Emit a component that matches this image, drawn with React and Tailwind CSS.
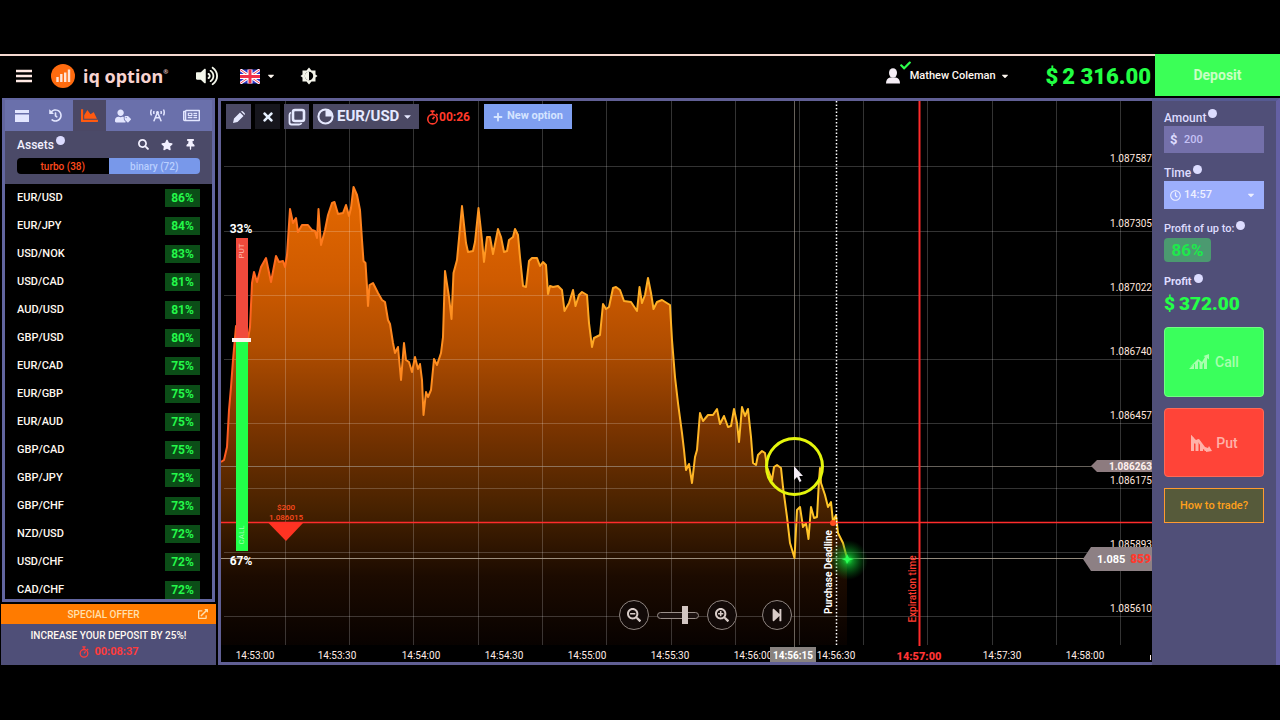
import React from "react";
import {
  FaBars, FaVolumeUp, FaCaretDown, FaHistory, FaChartArea, FaBroadcastTower, FaSearch, FaStar,
  FaThumbtack, FaExternalLinkAlt, FaCheck, FaTimes, FaPlus, FaSearchMinus, FaSearchPlus,
  FaStepForward, FaRegNewspaper, FaUserTag, FaRegClock,
} from "react-icons/fa";

const ASSETS = [
  ["EUR/USD", 86], ["EUR/JPY", 84], ["USD/NOK", 83], ["USD/CAD", 81], ["AUD/USD", 81],
  ["GBP/USD", 80], ["EUR/CAD", 75], ["EUR/GBP", 75], ["EUR/AUD", 75], ["GBP/CAD", 75],
  ["GBP/JPY", 73], ["GBP/CHF", 73], ["NZD/USD", 72], ["USD/CHF", 72], ["CAD/CHF", 72],
];

const LINE =
  "221,462 224,460 227,447 229,410 231,387 233,360 236,326 239,345 247,345 250,327 252,283 254,272 257,282 261,267 266,258 271,282 276,256 279,262 283,261 285,267 287,255 290,209 293,223 296,218 298,232 302,225 308,225 312,230 315,231 317,238 318.5,209 321,245 325,230 328,215 332,203 334.5,202 338,214 343,213 346,205 349,216 351,208 353.5,187 357,195 360,210 362,240 363.5,261 365.5,263 367,287 368,306 369.5,285 373,283 378,293 382,300 385,302 388,320 390,324 393,343 395,353 398,347 401,380 404,343 406,360 409,362 412,372 415,357 418,369 420,364 422,380 423.5,415 426,392 428,397 431,390 434,359 437,365 441,353 443,337 445,271 449,297 451.5,319 453.5,273 457,260 462,206 466,243 468,252 473,251 475,242 478.5,208 482,240 484,262 487,237 490,237 493,254 498,229 501,237 504,252 507,251 509,240 513,237 515,229 518,235 520,257 523,286 526,287 529,261 532,258 537,258 540,266 543,262 546,265 548,294 550,286 553,287 558,286 562,290 564.5,311 569,303 573,290 575.5,306 579,295 582,292 587,295 589,323 592,347 594,338 600,335 603,304 606,309 609,307 613,288 616,287 620,290 624,301 631,302 637,311 639.5,287 642,303 645,295 648,278 651,293 653.5,309 657,302 662,300 670,305 672,340 675,377 678,403 682,433 684,450 686,470 689,464 692,483 695,457 697,450 700,413 703,421 708,415 713,415 717,409 720,424 724,416 728,427 731,426 734,409 737,423 739,442 742,407 745,416 748,409 751,437 753,463 756,465 758,455 762,451 765,453 767,467 772,480 774,467 777,465 781,468 783,487 787,517 790,543 794.5,558 797,510 800,507 803,527 806,523 808.5,539 811,507 814,518 817,517 819,480 820,468 821,483 825,495 828,507 831,502 833,522 836,515 838,533 843,543 847,558";

const GRID_X = [285.5, 349.5, 413.5, 478.5, 542.5, 606.5, 671.5, 735.5, 799.5, 863.5, 927.5, 992.5, 1056.5, 1120.5];
const GRID_Y = [166.5, 231.5, 295.5, 359.5, 423.5, 488.5, 552.5, 616.5];
const PRICES = ["1.087587", "1.087305", "1.087022", "1.086740", "1.086457", "1.086175", "1.085893", "1.085610"];
const TIMES = [
  [255, "14:53:00"], [337, "14:53:30"], [421, "14:54:00"], [504, "14:54:30"], [587, "14:55:00"],
  [670, "14:55:30"], [753, "14:56:00"], [836, "14:56:30"], [1002, "14:57:30"], [1085, "14:58:00"],
];

function Hint() {
  return <span aria-hidden="true" className="mb-2 ml-0.5 inline-block size-[9px] rounded-full bg-[#dcdcff]" />;
}

function Stopwatch({ className }) {
  return (
    <svg viewBox="0 0 16 18" className={className} fill="none" stroke="currentColor" strokeWidth="2" aria-hidden="true">
      <circle cx="8" cy="11" r="5.8" />
      <path d="M5.5 1.2h5M8 1.5v3M12.5 4.5l1.8 1.8M8 11l2.5-3" />
    </svg>
  );
}

function Flag() {
  return (
    <svg viewBox="0 0 20 14" className="h-[15px] w-5" aria-hidden="true">
      <rect width="20" height="14" fill="#2b35c8" />
      <path d="M0 0l20 14M20 0L0 14" stroke="#fff" strokeWidth="3" />
      <path d="M0 0l20 14M20 0L0 14" stroke="#f0405a" strokeWidth="1" />
      <path d="M10 0v14M0 7h20" stroke="#fff" strokeWidth="5" />
      <path d="M10 0v14M0 7h20" stroke="#f0304a" strokeWidth="3" />
    </svg>
  );
}

function Header() {
  return (
    <header className="flex h-[42px] items-center border-t-2 border-[#f5d9d0] bg-black">
      <button aria-label="Menu" className="ml-4">
        <svg viewBox="0 0 16 14" className="h-[14px] w-4" stroke="#ffe9e4" strokeWidth="2.600" aria-hidden="true"><path d="M0 2h16M0 7h16M0 12h16" /></svg>
      </button>
      <a href="#home" className="ml-[19px] flex items-center" aria-label="iq option">
        <svg viewBox="0 0 24 24" className="size-6" aria-hidden="true">
          <circle cx="12" cy="12" r="12" fill="#ff6b0f" />
          <path d="M6.500 18v-5M10.300 18v-8M14.200 18V8.500M18 18V5.500" stroke="#ffe3d6" strokeWidth="2.400" />
        </svg>
        <span className="ml-2 flex items-start font-['Noto_Sans'] text-[18px] leading-6 font-bold text-[#f7d3d0]">
          iq option<span className="text-[6px] leading-4">®</span>
        </span>
      </a>
      <button aria-label="Sound" className="ml-7"><FaVolumeUp size={22} color="#f3f6ea" /></button>
      <button aria-label="Language" className="ml-[22px] flex items-center gap-1.5"><Flag /><FaCaretDown size={10} /></button>
      <button aria-label="Theme" className="ml-6">
        <svg viewBox="0 0 18 18" className="size-[18px]" aria-hidden="true">
          <path d="M9 .5l2.500 3h4v4L17.500 9l-2 1.500v4h-4L9 17.500l-2.500-3h-4v-4L.5 9l2-1.500v-4h4z" fill="#f4f4ea" />
          <circle cx="9" cy="9" r="4.200" fill="#000" />
          <path d="M9 4.800a4.200 4.200 0 0 0 0 8.400z" fill="#f4f4ea" />
        </svg>
      </button>
      <div className="flex-1" />
      <button className="flex items-center text-[11px] font-medium">
        <span className="relative mr-2.5">
          <svg viewBox="0 0 14 16" className="h-4 w-[14px]" fill="#f5eef5" aria-hidden="true">
            <ellipse cx="7" cy="5" rx="4" ry="4.800" /><path d="M0 15.500q0-5 4-6h6q4 1 4 6z" />
          </svg>
          <FaCheck size={11} color="#2dff4c" className="absolute -top-2 left-[14px]" />
        </span>
        Mathew Coleman<FaCaretDown size={10} className="ml-1" />
      </button>
      <div className="mr-1 ml-9 flex items-center gap-1 text-[22px] font-black text-[#22ff44]">
        <span>$</span><span>2 316.00</span>
      </div>
      <button className="-mt-0.5 h-[42px] w-[125px] bg-[#3bff57] text-[14px] font-bold text-[#c9ffc4]">Deposit</button>
    </header>
  );
}

function AssetsPanel() {
  const tab = "flex h-full flex-1 items-center justify-center text-[#e3e6ff]";
  return (
    <aside className="flex w-[216px] shrink-0 flex-col pl-0.5">
      <div className="mr-px flex h-[504px] flex-col overflow-hidden border-[3px] border-t-2 border-[#6266a0] bg-black">
        <div className="flex h-[31px] shrink-0 bg-[#6a70ab] pr-1">
          <button aria-label="Portfolio" className={tab}>
            <svg viewBox="0 0 14 14" className="size-[14px]" fill="currentColor"><path d="M0 1h14v3H0zM0 5.500h14V13H0z" /></svg>
          </button>
          <button aria-label="History" className={tab}><FaHistory size={13} /></button>
          <button aria-label="Assets" className="flex flex-1 items-center justify-center bg-[#4b4865] text-[#ff5a10]"><FaChartArea size={17} /></button>
          <button aria-label="Traders" className={tab}><FaUserTag size={16} /></button>
          <button aria-label="Signals" className={tab}><FaBroadcastTower size={15} /></button>
          <button aria-label="News" className={tab}><FaRegNewspaper size={17} /></button>
        </div>
        <div className="h-[53px] shrink-0 bg-[#4b4a68] px-3">
          <div className="flex h-[27px] items-center text-[12px] font-medium text-[#f2f0ff]">
            <span className="flex items-center">Assets<Hint /></span>
            <div className="mr-1 ml-auto flex gap-3">
              <button aria-label="Search"><FaSearch size={11} /></button>
              <button aria-label="Favourites"><FaStar size={12} /></button>
              <button aria-label="Pin"><FaThumbtack size={11} /></button>
            </div>
          </div>
          <div className="flex h-4 overflow-hidden rounded-sm text-[10px] font-medium">
            <button className="flex-1 bg-black text-[#ff4a1c]">turbo (38)</button>
            <button className="flex-1 bg-[#7898ea] text-[#b9cfff]">binary (72)</button>
          </div>
        </div>
        <table className="w-full shrink-0 text-[12px] font-medium">
          <tbody>
            {ASSETS.map(([name, pct]) => (
              <tr key={name} className="h-7">
                <td className="py-0 pl-3 text-[11px]">{name}</td>
                <td className="py-0 pr-3">
                  <span className="ml-auto block h-[18px] w-[35px] bg-[#0b4d17] text-center leading-[18px] font-bold text-[#24f84a]">{pct}%</span>
                </td>
              </tr>
            ))}
          </tbody>
        </table>
      </div>
      <a href="#offer" className="-ml-px mt-0.5 flex h-5 items-center bg-[#ff7b00] px-2 text-[10px] font-medium text-[#ffe0ae]">
        <span className="flex-1 text-center">SPECIAL OFFER</span><FaExternalLinkAlt size={10} />
      </a>
      <div className="-ml-px flex flex-1 flex-col items-center bg-[#4f4f78] pt-1 text-[10px] leading-4 font-medium">
        <span>INCREASE YOUR DEPOSIT BY 25%!</span>
        <span className="flex items-center gap-1 text-[11px] font-bold text-[#ff3b3b]"><Stopwatch className="size-3" />00:08:37</span>
      </div>
    </aside>
  );
}

function Chart() {
  return (
    <svg viewBox="221 101 931 561" className="block h-auto w-full" fontFamily="Roboto, sans-serif" role="img" aria-label="EUR/USD price chart">
      <defs>
        <linearGradient id="area" gradientUnits="userSpaceOnUse" x1="0" y1="187" x2="0" y2="645">
          <stop offset="0" stopColor="#e46800" />
          <stop offset="0.2" stopColor="#cf5b00" />
          <stop offset="0.35" stopColor="#b04d00" />
          <stop offset="0.52" stopColor="#7c3500" />
          <stop offset="0.7" stopColor="#482200" />
          <stop offset="0.85" stopColor="#1c0b00" />
          <stop offset="1" stopColor="#080200" />
        </linearGradient>
        <linearGradient id="stroke" gradientUnits="userSpaceOnUse" x1="221" y1="0" x2="850" y2="0">
          <stop offset="0" stopColor="#ff5a22" />
          <stop offset="0.15" stopColor="#ff7a1c" />
          <stop offset="0.5" stopColor="#ffa024" />
          <stop offset="1" stopColor="#ffc928" />
        </linearGradient>
        <radialGradient id="glow">
          <stop offset="0" stopColor="#1cff45" />
          <stop offset="0.25" stopColor="#11c832" stopOpacity="0.7" />
          <stop offset="1" stopColor="#067a18" stopOpacity="0" />
        </radialGradient>
      </defs>
      <polygon points={LINE + " 847,645 221,645"} fill="url(#area)" />
      <g stroke="#fff" strokeOpacity="0.2">
        {GRID_X.map((x) => <path key={x} d={`M${x} 101V645`} />)}
        {GRID_Y.map((y) => <path key={y} d={`M224 ${y}H1152`} />)}
      </g>
      <path d="M221 466.500H1094M794.500 101V648" stroke="#aaa296" strokeOpacity="0.6" />
      <path d="M221 558.500H1086" stroke="#c5b9a8" strokeOpacity="0.75" />
      <polyline points={LINE} fill="none" stroke="url(#stroke)" strokeWidth="2" strokeLinejoin="round" />
      <path d="M221 522.500H1152" stroke="#ff2c2c" strokeWidth="1.500" />
      <path d="M836.500 101V645" stroke="#fff" strokeWidth="1.500" strokeDasharray="1.500 2" />
      <path d="M919.500 101V646" stroke="#ff2b2b" strokeWidth="2" />
      <circle cx="833" cy="523" r="3" fill="#ff4b20" />
      <circle cx="848" cy="560" r="20" fill="url(#glow)" />
      <path d="M847 554l2 4 5 1-5 1.500-2 3.500-1.500-3.500-4-1.500 4-1z" fill="#2bff55" />

      <path d="M268.500 523H303L286 541z" fill="#ff3322" />
      <g fill="#ff4a1e" fontSize="8" fontWeight="500" textAnchor="middle">
        <text x="286" y="510">$200</text>
        <text x="286" y="520">1.086015</text>
      </g>

      <rect x="236" y="238" width="12" height="103" fill="#f04a3c" />
      <rect x="236" y="341" width="12" height="210" fill="#22ff49" />
      <rect x="232" y="338" width="19" height="4" fill="#fff0ec" />
      <g fill="#fff" fontSize="12" fontWeight="700" textAnchor="middle">
        <text x="241" y="233">33%</text>
        <text x="241" y="565">67%</text>
      </g>
      <g fontSize="8" textAnchor="middle">
        <text transform="translate(244 251) rotate(-90)" fill="#ffb9ae">PUT</text>
        <text transform="translate(244 535) rotate(-90)" fill="#9cffac">CALL</text>
      </g>

      <text transform="translate(832 572) rotate(-90)" fill="#fff" fontSize="10" fontWeight="700" textAnchor="middle">Purchase Deadline</text>
      <text transform="translate(916 589) rotate(-90)" fill="#ff3c2e" fontSize="10" fontWeight="500" textAnchor="middle">Expiration time</text>

      <g fill="#ffe6df" fontSize="10" textAnchor="end">
        {PRICES.map((p, i) => <text key={p} x="1152" y={GRID_Y[i] - 4.5}>{p}</text>)}
      </g>
      <path d="M1091 466l6-6h55v12h-55z" fill="#8d7b7f" />
      <text x="1152" y="470" fill="#fff0ee" fontSize="10" fontWeight="700" textAnchor="end">1.086263</text>
      <path d="M1083 559l8-12h61v24h-61z" fill="#8d8084" />
      <text x="1097" y="563" fill="#fff" fontSize="11" fontWeight="700">1.085</text>
      <text x="1151" y="563" fill="#ff3a2e" fontSize="12" fontWeight="900" textAnchor="end">859</text>

      <g fill="#ffece6" fontSize="10" textAnchor="middle">
        {TIMES.map(([x, t]) => <text key={t} x={x} y="659">{t}</text>)}
        <rect x="770" y="647" width="46" height="15" fill="#88827f" />
        <text x="793" y="659" fill="#fff" fontWeight="700">14:56:15</text>
        <text x="919" y="660" fill="#ff3434" fontSize="11" fontWeight="900">14:57:00</text>
      </g>
      <rect x="1150" y="655" width="1" height="5" fill="#ffece6" />

      <circle cx="794.500" cy="466.500" r="28" fill="none" stroke="#e4f50c" strokeWidth="3" />
      <path d="M794 466v14l3-3 2.500 5 2-1-2.500-5h4z" fill="#f3ecf5" />
    </svg>
  );
}

function ChartPanel() {
  const tool = "flex size-[25px] items-center justify-center bg-[#4b4964] text-[#e6e9ff]";
  const round = "flex size-[30px] items-center justify-center rounded-full border border-[#8f8580] bg-[#120a08] text-[#d8ccc8]";
  return (
    <main className="relative ml-0.5 min-w-0 flex-1 border-y-[3px] border-l-[3px] border-[#605f94]">
      <Chart />
      <div className="absolute top-[3px] left-[5px] flex items-start gap-1">
        <button aria-label="Draw" className={tool}>
          <svg viewBox="0 0 14 14" className="size-[14px]" fill="currentColor" aria-hidden="true"><path d="M1 13l1-4.500 6-6L11.500 6l-6 6zM9 1.500q1-1 2 0l1.500 1.500q1 1 0 2z" /></svg>
        </button>
        <button aria-label="Close" className="flex size-[25px] items-center justify-center bg-[#16161d] text-[#e6f0ff]"><FaTimes size={14} /></button>
        <button aria-label="Duplicate" className={tool}>
          <svg viewBox="0 0 18 18" className="size-[18px]" fill="none" stroke="currentColor" aria-hidden="true">
            <rect x="5" y="2" width="11" height="11" rx="2" strokeWidth="2.600" />
            <path d="M3 4.500Q1.500 5 1.500 7v7.500q0 2 2 2H11q2 0 2.500-1.500" strokeWidth="1.800" />
          </svg>
        </button>
        <div className="relative flex h-[25px] w-[106px] items-center bg-[#4b4964] text-[#e6e9ff]">
          <svg viewBox="0 0 18 18" className="absolute left-1 size-[17px]" fill="none" stroke="currentColor" strokeWidth="2.200" aria-hidden="true">
            <circle cx="9" cy="9" r="7.500" /><path d="M9 2v7h7A7 7 0 0 0 9 2z" fill="currentColor" stroke="none" />
          </svg>
          <select aria-label="Asset" className="h-full w-full appearance-none bg-transparent pl-6 text-[15px] font-bold">
            <option>EUR/USD</option>
          </select>
          <FaCaretDown size={11} className="pointer-events-none absolute right-1.5" />
        </div>
        <div className="ml-[3px] flex h-[26px] items-center text-[12px] font-bold text-[#ff3a2a]"><Stopwatch className="h-[15px] w-[13px]" />00:26</div>
        <button className="ml-2.5 flex h-[25px] w-[88px] items-center justify-center gap-1 bg-[#7f9ff0] text-[11px] font-bold text-[#d5e4ff]"><FaPlus size={10} />New option</button>
      </div>
      <div className="absolute bottom-8 left-[398px] flex items-center">
        <button aria-label="Zoom out" className={round}><FaSearchMinus size={14} /></button>
        <input
          type="range" aria-label="Zoom" defaultValue="70"
          className="mx-2 h-[7px] w-[42px] appearance-none rounded-sm border border-[#9a8f8a] bg-[#1c1210] [&::-webkit-slider-thumb]:h-[18px] [&::-webkit-slider-thumb]:w-[6px] [&::-webkit-slider-thumb]:appearance-none [&::-webkit-slider-thumb]:bg-[#d2c6c2]"
        />
        <button aria-label="Zoom in" className={round}><FaSearchPlus size={14} /></button>
        <button aria-label="Go to latest" className="ml-[25px] flex size-[30px] items-center justify-center rounded-full border border-[#8f8580] bg-[#120a08] text-[#d8ccc8]"><FaStepForward size={14} /></button>
      </div>
    </main>
  );
}

function TradePanel() {
  return (
    <aside className="flex w-32 shrink-0 flex-col border-t-[3px] border-r-4 border-t-[#565a92] border-r-[#6460a4] bg-[#504f78] px-3 text-[12px] leading-4 font-medium text-[#dedcff]">
      <label htmlFor="amount" className="mt-2 flex h-[17px] items-center">Amount<Hint /></label>
      <div className="relative flex h-[27px] items-center bg-[#7470aa]">
        <span className="absolute left-1.5 text-[13px] font-bold">$</span>
        <input id="amount" defaultValue="200" className="h-full w-full bg-transparent pl-5 text-[11px] text-[#c4c1f5] outline-none" />
      </div>
      <label htmlFor="time" className="mt-3 flex h-4 items-center">Time<Hint /></label>
      <div className="relative flex h-7 items-center bg-[#9caefc] text-[#eef0ff]">
        <FaRegClock size={11} className="absolute left-1.5" />
        <select id="time" className="h-full w-full appearance-none bg-transparent pl-5 text-[11px]"><option>14:57</option></select>
        <FaCaretDown size={10} className="pointer-events-none absolute right-2" />
      </div>
      <div className="mt-3 flex h-4 items-center text-[11px] whitespace-nowrap">Profit of up to:<Hint /></div>
      <div className="mt-px flex h-6 w-[47px] items-center justify-center rounded-sm bg-[#4b9a70] text-[17px] font-bold text-[#1ee84c]">86%</div>
      <div className="mt-3 flex h-4 items-center text-[11px] font-bold">Profit<Hint /></div>
      <div className="mt-0.5 flex h-6 items-center gap-1 text-[19px] font-black text-[#24ff48]"><span>$</span>372.00</div>
      <button className="mt-[11px] flex h-[70px] items-center justify-center gap-1 rounded-sm border border-[#72ff84] bg-[#3aff5c] text-[14px] text-[#a8ffae]">
        <svg viewBox="0 0 22 18" className="h-[18px] w-[22px]" fill="currentColor" aria-hidden="true">
          <path d="M0 16l5-5v5zM6 16v-6l3-3v9zM10.500 16V8l3 2v6zM15 16V8l3-4v12z" />
          <path d="M1 14l8-8 4 3 3-5-1.500-1L20 1v5.500L18 5l-4.500 6.500-4-3z" />
        </svg>Call
      </button>
      <button className="mt-[11px] flex h-[69px] items-center justify-center gap-1 rounded-sm border border-[#ff6a56] bg-[#ff4438] text-[14px] text-[#ffb1a8]">
        <svg viewBox="0 0 22 18" className="h-[18px] w-[22px]" fill="currentColor" aria-hidden="true">
          <path d="M1 17V1l3 3v13zM5.500 17V7l3-2v12zM10 17V7l3 5v5zM14.500 17v-4l2 2v2z" />
          <path d="M1 1l5 5 3-1 6 8 3 1 1-2 3 5-6 1v-1.500l-3-1.500-5-7-3 2-4-4z" />
        </svg>Put
      </button>
      <button className="mt-[11px] h-[35px] border border-[#ff9b30] bg-[#565a3a] text-[11px] text-[#ffa01c]">How to trade?</button>
    </aside>
  );
}

export default function App() {
  return (
    <div className="min-h-screen bg-black pt-[54px] font-['Roboto',sans-serif] text-[#fff8f0]">
      <Header />
      <div className="mt-0.5 flex">
        <AssetsPanel />
        <ChartPanel />
        <TradePanel />
      </div>
    </div>
  );
}
